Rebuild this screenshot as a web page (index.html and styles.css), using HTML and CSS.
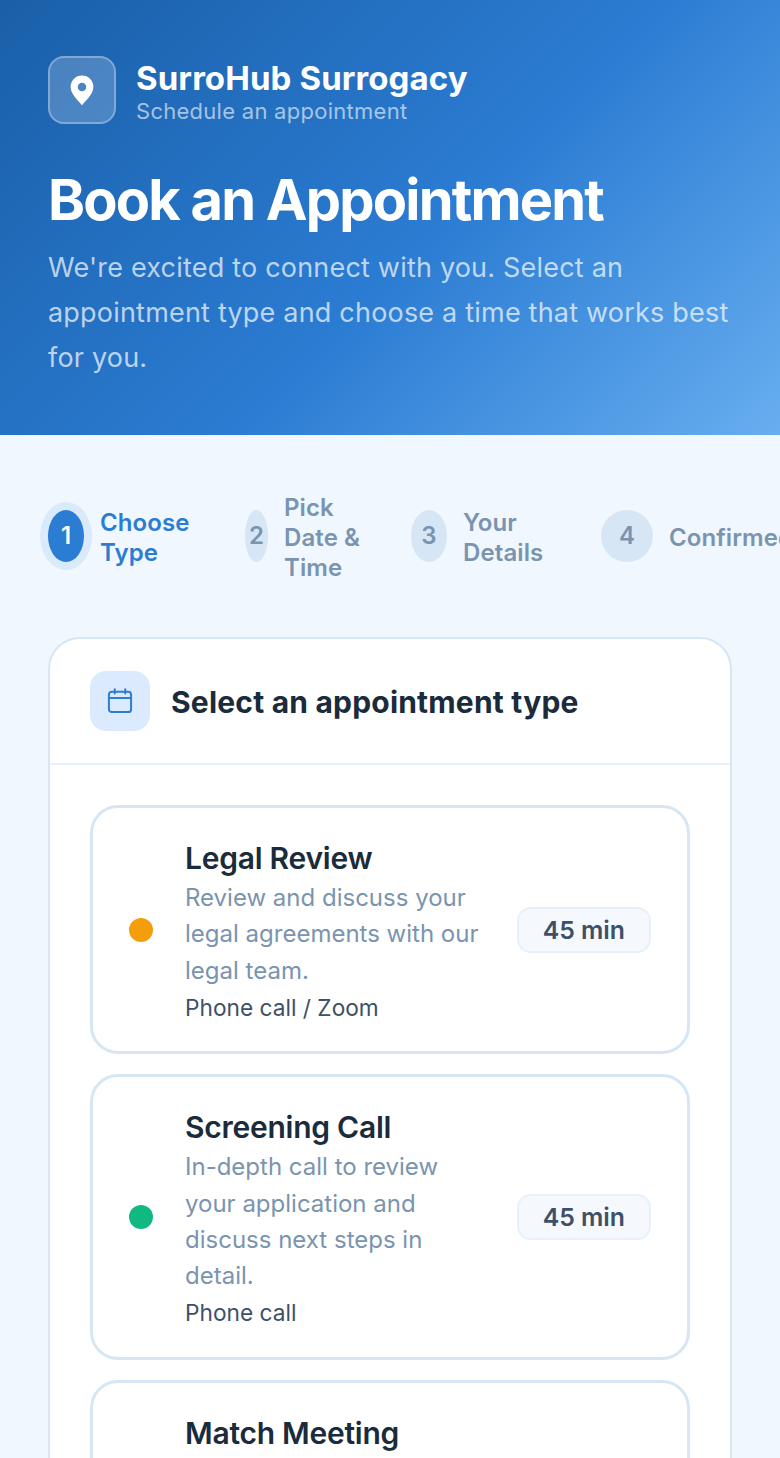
FILE: index.html
```html
<!DOCTYPE html>
<html lang="en">

<head>
    <meta charset="UTF-8">
    <title>SurroHub Surrogacy - Book an Appointment</title>
    <link rel="stylesheet" href="styles.css">
</head>

<body>
    <header class="hero">
        <div class="brand">
            <div class="brand-icon">
                <svg width="34" height="34" viewBox="0 0 24 24">
                    <path fill="#fff" fill-rule="evenodd" d="M12 1.800a8 8 0 0 0-8 8c0 4.800 4.600 8.800 8 12.900 3.400-4.100 8-8.100 8-12.900a8 8 0 0 0-8-8zm0 5a3 3 0 1 1 0 6 3 3 0 0 1 0-6z" />
                </svg>
            </div>
            <div class="brand-text">
                <div class="brand-name">SurroHub Surrogacy</div>
                <div class="brand-sub">Schedule an appointment</div>
            </div>
        </div>
        <h1>Book an Appointment</h1>
        <p class="intro">We're excited to connect with you. Select an appointment type and choose a time that works best for you.</p>
    </header>

    <main class="content">
        <div class="steps">
            <div class="step active">
                <div class="num num-mid">1</div>
                <div class="label">Choose Type</div>
            </div>
            <div class="step">
                <div class="num num-thin">2</div>
                <div class="label">Pick Date &amp; Time</div>
            </div>
            <div class="step">
                <div class="num num-mid">3</div>
                <div class="label">Your Details</div>
            </div>
            <div class="step">
                <div class="num">4</div>
                <div class="label nowrap">Confirmed</div>
            </div>
        </div>

        <section class="panel">
            <div class="panel-head">
                <div class="panel-icon">
                    <svg width="28" height="28" viewBox="0 0 24 24" fill="none" stroke="#2b7cd3" stroke-width="1.700" stroke-linecap="round" stroke-linejoin="round">
                        <rect x="2.500" y="4" width="19" height="17.500" rx="2.500" />
                        <path d="M2.500 9.500h19M7.500 2v3.500M16.500 2v3.500" />
                    </svg>
                </div>
                <h2>Select an appointment type</h2>
            </div>
            <div class="panel-body">
                <article class="type">
                    <span class="dot orange"></span>
                    <div class="type-text">
                        <h3>Legal Review</h3>
                        <p class="desc">Review and discuss your legal agreements with our legal team.</p>
                        <p class="meta">Phone call / Zoom</p>
                    </div>
                    <span class="badge">45 min</span>
                </article>
                <article class="type">
                    <span class="dot green"></span>
                    <div class="type-text">
                        <h3>Screening Call</h3>
                        <p class="desc">In-depth call to review your application and discuss next steps in detail.</p>
                        <p class="meta">Phone call</p>
                    </div>
                    <span class="badge">45 min</span>
                </article>
                <article class="type">
                    <span class="dot"></span>
                    <div class="type-text">
                        <h3>Match Meeting</h3>
                        <p class="desc">Meet your matched family and talk through the next steps together.</p>
                        <p class="meta">Zoom</p>
                    </div>
                    <span class="badge">60 min</span>
                </article>
            </div>
        </section>
    </main>
</body>

</html>
```

FILE: styles.css
```css
* {
    box-sizing: border-box;
}

html,
body {
    height: 100%;
    overflow: hidden;
}

body {
    margin: 0;
    background-color: #f0f7ff;
    color: #1a2b3c;
    font-family: Inter, "Noto Sans", sans-serif;
}

h1,
h2,
h3,
p {
    margin: 0;
}

.hero {
    height: 435px;
    padding: 56px 48px 0;
    background: linear-gradient(135deg, #1a5fa8 0%, #2b7cd3 55%, #68aef0 100%);
    color: #fff;
}

.brand {
    display: flex;
    align-items: center;
    gap: 20px;
    height: 68px;
}

.brand-icon {
    width: 68px;
    height: 68px;
    display: flex;
    align-items: center;
    justify-content: center;
    background-color: rgba(255, 255, 255, .2);
    border: 2px solid rgba(255, 255, 255, .3);
    border-radius: 16px;
}

.brand-text {
    padding-top: 2px;
}

.brand-name {
    font-size: 33px;
    line-height: 40px;
    font-weight: 700;
    letter-spacing: .1px;
}

.brand-sub {
    font-size: 22px;
    line-height: 27px;
    letter-spacing: .27px;
    color: rgba(255, 255, 255, .6);
}

h1 {
    margin-top: 44px;
    font-size: 56px;
    line-height: 64px;
    font-weight: 700;
    letter-spacing: -1.800px;
}

.intro {
    margin-top: 13px;
    font-size: 27px;
    line-height: 45px;
    letter-spacing: .2px;
    color: rgba(255, 255, 255, .7);
}

.content {
    padding: 56px 48px 0;
}

/* the row runs past the right edge of the page, so it is clipped there */
.steps {
    display: grid;
    grid-template-columns: 165px 134px 158px auto;
    column-gap: 32px;
    height: 161px;
    margin: -15px -48px 0 -15px;
    padding: 15px 0 0 15px;
    overflow: hidden;
    align-items: start;
}

.step {
    display: flex;
    align-items: center;
    gap: 16px;
    color: #7a94b0;
    font-size: 24px;
    line-height: 30px;
    font-weight: 600;
    letter-spacing: .1px;
    height: 90px;
}

.label {
    padding-top: 3px;
}

.num {
    flex: none;
    width: 52px;
    height: 52px;
    display: flex;
    align-items: center;
    justify-content: center;
    border-radius: 50%;
    background-color: #d6e6f5;
}

.num-mid {
    width: 36px;
}

.num-thin {
    width: 23px;
}

.step.active {
    color: #2b7cd3;
}

.step.active .num {
    background-color: #2b7cd3;
    color: #fff;
    box-shadow: 0 0 0 8px #d9eafb;
}

.nowrap {
    white-space: nowrap;
}

.panel {
    background-color: #fff;
    border: 2px solid #d6e6f5;
    border-radius: 32px;
}

.panel-head {
    display: flex;
    align-items: center;
    gap: 21px;
    padding: 32px 40px;
    border-bottom: 2px solid #e8f1fa;
}

.panel-icon {
    width: 60px;
    height: 60px;
    display: flex;
    align-items: center;
    justify-content: center;
    background-color: #dbeafe;
    border-radius: 16px;
}

h2 {
    font-size: 30px;
    font-weight: 700;
    line-height: 38px;
    letter-spacing: .2px;
    padding-top: 2px;
}

.panel-body {
    padding: 40px;
    display: flex;
    flex-direction: column;
    gap: 20px;
}

.type {
    display: flex;
    align-items: center;
    gap: 32px;
    padding: 30.250px 36px;
    background-color: #fff;
    border: 3px solid #d6e6f5;
    border-radius: 28px;
}

.dot {
    flex: none;
    width: 24px;
    height: 24px;
    border-radius: 50%;
    background-color: #2b7cd3;
}

.orange {
    background-color: #f59e0b;
}

.green {
    background-color: #10b981;
}

/* text sits a little under the centre line of the dot and badge */
.type-text {
    flex: 1;
    padding-top: 1.750px;
    margin-bottom: -1.750px;
}

h3 {
    font-size: 30px;
    line-height: 36px;
    font-weight: 600;
    letter-spacing: -.25px;
    margin-bottom: 4px;
}

.desc {
    font-size: 24px;
    line-height: 36.250px;
    color: #7a94b0;
}

.meta {
    margin-top: 4px;
    font-size: 22.700px;
    line-height: 30px;
    color: #3d5068;
}

.badge {
    flex: none;
    padding: 6px 24px;
    font-size: 24.800px;
    line-height: 30px;
    font-weight: 600;
    color: #3d5068;
    background-color: #f5f9fe;
    border: 2px solid #e8f1fa;
    border-radius: 14px;
}
```
